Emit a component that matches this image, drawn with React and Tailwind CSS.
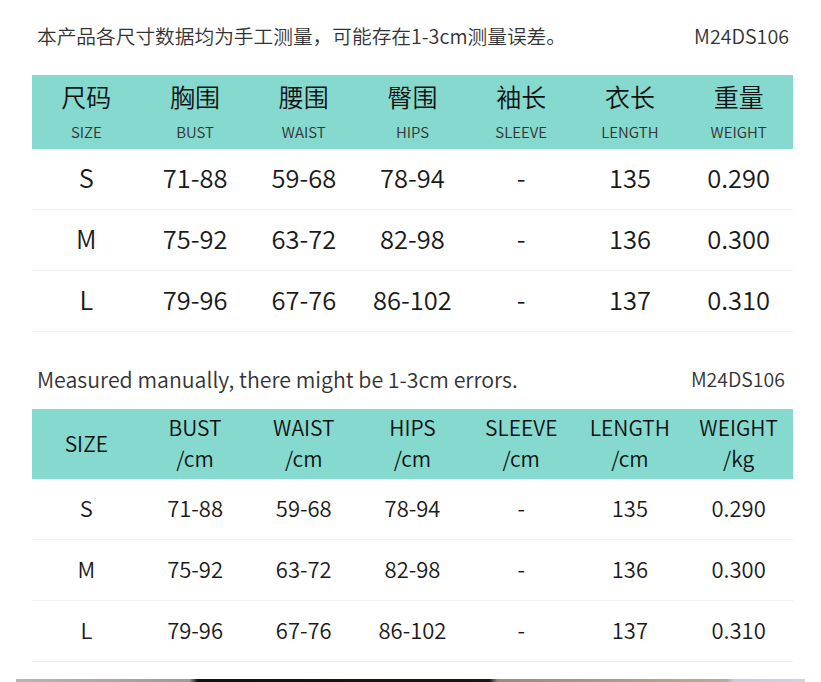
const cols = [
  { zh: "尺码", en: "SIZE", unit: "" },
  { zh: "胸围", en: "BUST", unit: "/cm" },
  { zh: "腰围", en: "WAIST", unit: "/cm" },
  { zh: "臀围", en: "HIPS", unit: "/cm" },
  { zh: "袖长", en: "SLEEVE", unit: "/cm" },
  { zh: "衣长", en: "LENGTH", unit: "/cm" },
  { zh: "重量", en: "WEIGHT", unit: "/kg" },
];

const rows = [
  ["S", "71-88", "59-68", "78-94", "-", "135", "0.290"],
  ["M", "75-92", "63-72", "82-98", "-", "136", "0.300"],
  ["L", "79-96", "67-76", "86-102", "-", "137", "0.310"],
];

function Rows({ size }) {
  return (
    <div>
      {rows.map((r) => (
        <div
          key={r[0]}
          className={`grid grid-cols-7 h-[61px] pb-[3px] border-b border-[#efefef] text-[#1a1a1a] font-[350] ${size}`}
        >
          {r.map((v, i) => (
            <div key={i} className="flex items-center justify-center">
              {v}
            </div>
          ))}
        </div>
      ))}
    </div>
  );
}

export default function App() {
  return (
    <div
      className="w-[821px] h-[682px] bg-white overflow-hidden relative"
      style={{ fontFamily: '"Noto Sans CJK SC", "Noto Sans", sans-serif' }}
    >
      <div className="pl-[32px] pr-[28px] pt-[18px]">
        <div className="h-[36px] flex items-center justify-between pl-[5px] pr-[4px] text-[#333] text-[19.7px] font-[350]">
          <span>本产品各尺寸数据均为手工测量，可能存在1-3cm测量误差。</span>
          <span>M24DS106</span>
        </div>

        <div className="mt-[21px] h-[74px] bg-[#85d9ce] grid grid-cols-7">
          {cols.map((c) => (
            <div key={c.en} className="flex flex-col items-center">
              <div className="mt-[6px] h-[32px] flex items-center text-[25px] text-[#111] font-[350]">
                {c.zh}
              </div>
              <div className="mt-[8px] h-[22px] flex items-center text-[15px] text-[#333] font-[350]">
                {c.en}
              </div>
            </div>
          ))}
        </div>
        <Rows size="text-[25.5px]" />

        <div className="mt-[30px] h-[34px] flex items-center justify-between pl-[5px] pr-[8px] text-[#333] text-[21.3px] font-[350]">
          <span>Measured manually, there might be 1-3cm errors.</span>
          <span className="text-[19.5px]">M24DS106</span>
        </div>

        <div className="mt-[13px] h-[70px] bg-[#85d9ce] grid grid-cols-7 text-[21px] text-[#111] font-[350]">
          {cols.map((c) =>
            c.unit ? (
              <div key={c.en} className="flex flex-col items-center pt-[4px]">
                <div className="h-[30px] flex items-center">{c.en}</div>
                <div className="h-[32px] flex items-center">{c.unit}</div>
              </div>
            ) : (
              <div key={c.en} className="flex items-center justify-center">
                {c.en}
              </div>
            )
          )}
        </div>
        <Rows size="text-[22px]" />
      </div>

      <div className="absolute left-[16px] right-[16px] bottom-0 h-[3px] bg-[linear-gradient(to_right,#b9b6b2_0%,#a09a94_22%,#111_23%,#1a1816_60%,#9a8c7c_61%,#b8ab9a_90%,#c9cdd8_91%,#cfd3de_100%)]" />
    </div>
  );
}
